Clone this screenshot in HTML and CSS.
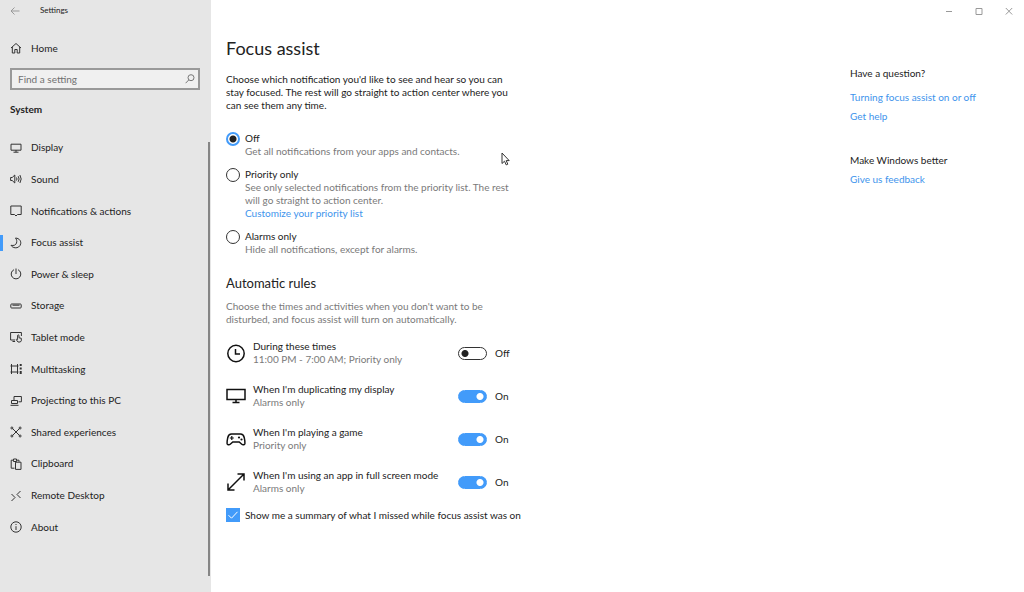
FILE: index.html
```html
<!DOCTYPE html>
<html lang="en">
<head>
    <meta charset="UTF-8">
    <meta name="viewport" content="width=device-width, initial-scale=1.0">
    <title>Settings</title>
    <link rel="stylesheet" href="styles.css">
</head>
<body>
    <div class="sidebar">
        <header class="titlebar">
            <button class="back" aria-label="Back">
                <svg width="10" height="10" viewBox="0 0 10 10"><path d="M9.5 5H1M4.5 1.5L1 5l3.5 3.5"/></svg>
            </button>
            <span>Settings</span>
        </header>

        <a class="nav-link home" href="#">
            <svg class="icon" viewBox="0 0 12 12"><path d="M1 6l5-4.5L11 6M2.3 5v6h2.5V7.5h2.4V11h2.5V5"/></svg>
            Home
        </a>

        <form class="search">
            <input type="text" placeholder="Find a setting" aria-label="Find a setting">
            <svg width="10" height="10" viewBox="0 0 10 10"><circle cx="6" cy="3.7" r="3"/><path d="M3.8 5.9L.6 9.2"/></svg>
        </form>

        <h2 class="section-name">System</h2>

        <div class="nav-area">
            <nav class="nav-list">
                <a class="nav-link" href="#">
                    <svg class="icon" viewBox="0 0 12 12"><path d="M1 2.2h10v6H1zM3.5 10.2h5M6 8.2v2"/></svg>
                    Display
                </a>
                <a class="nav-link" href="#">
                    <svg class="icon" viewBox="0 0 12 12"><path d="M.6 4.5h1.6L4.8 2v8L2.2 7.5H.6zM6.5 4.5q1 1.500 0 3M8.2 3.2q1.800 2.800 0 5.600M9.900 2q2.600 4 0 8"/></svg>
                    Sound
                </a>
                <a class="nav-link" href="#">
                    <svg class="icon" viewBox="0 0 12 12"><path d="M.8 1h10.400v8.500H7.500L6 11 4.500 9.500H.8z"/></svg>
                    Notifications &amp; actions
                </a>
                <a class="nav-link active" href="#">
                    <svg class="icon" viewBox="0 0 12 12"><path d="M5.500 1c4 .3 5.700 3.200 5.200 5.800-.5 2.700-3 4.300-5.500 4C3.300 10.600 1.800 9.700 1 8.300c2.800.6 4.800-.2 5.500-2.300.6-1.800.2-3.600-1-5z"/></svg>
                    Focus assist
                </a>
                <a class="nav-link" href="#">
                    <svg class="icon" viewBox="0 0 12 12"><path d="M6 .5V6M4 1.700a4.800 4.800 0 1 0 4 0"/></svg>
                    Power &amp; sleep
                </a>
                <a class="nav-link" href="#">
                    <svg class="icon" viewBox="0 0 12 12"><rect x=".8" y="4" width="10.400" height="4" rx=".8"/><path d="M2.500 5.200h7"/></svg>
                    Storage
                </a>
                <a class="nav-link" href="#">
                    <svg class="icon" viewBox="0 0 12 12"><path d="M5 9H.6V1.500h10.800V5M2.500 10.500h2.600M7.600 8.500V4.300q.8-.8 1.400 0v2.500l2.300.5v2.500L10.300 11H8L6.200 8.600q.5-.8 1.400-.1"/></svg>
                    Tablet mode
                </a>
                <a class="nav-link" href="#">
                    <svg class="icon" viewBox="0 0 12 12"><path d="M1.500 3v6M7.500 3v6M.5 3h8M.5 9h8M1.500 1v2M7.500 1v2M1.500 9v2M7.500 9v2"/><path class="bold" d="M10.700 1v2M10.700 4.500v2M10.700 8v3"/></svg>
                    Multitasking
                </a>
                <a class="nav-link" href="#">
                    <svg class="icon" viewBox="0 0 12 12"><path d="M4 5.500v-4h7.400v5.300H8.500M1.500 5.500h6v3h-6zM.5 10.300h8"/></svg>
                    Projecting to this PC
                </a>
                <a class="nav-link" href="#">
                    <svg class="icon" viewBox="0 0 12 12"><path d="M2.500 2.500L9.500 9.500M9.500 2.500L2.500 9.500"/><circle cx="1.900" cy="2" r="1"/><circle cx="10.100" cy="2" r="1"/><circle cx="1.900" cy="10" r="1"/><circle cx="10.100" cy="10" r="1"/></svg>
                    Shared experiences
                </a>
                <a class="nav-link" href="#">
                    <svg class="icon" viewBox="0 0 12 12"><path d="M4.500 10.200H1.200v-8H3.500V1h3v1.200H9v1.500M3.500 2.200v1.300h3V2.200M5.500 4.200H11v7.200H5.500z"/></svg>
                    Clipboard
                </a>
                <a class="nav-link" href="#">
                    <svg class="icon" viewBox="0 0 12 12"><path d="M1.500 4L5 7.500 1.500 11M10.500 1L7 4.500 10.500 8"/></svg>
                    Remote Desktop
                </a>
                <a class="nav-link" href="#">
                    <svg class="icon" viewBox="0 0 12 12"><circle cx="6" cy="6" r="5.200"/><path d="M6 5.200V9M6 3v1"/></svg>
                    About
                </a>
            </nav>
            <div class="scrollbar"></div>
        </div>
    </div>

    <main class="main">
        <div class="window-controls">
            <button aria-label="Minimize"><svg width="8" height="8" viewBox="0 0 8 8"><path d="M1 4.500h6"/></svg></button>
            <button aria-label="Maximize"><svg width="8" height="8" viewBox="0 0 8 8"><path d="M1 1.500h6v6H1z"/></svg></button>
            <button aria-label="Close"><svg width="8" height="8" viewBox="0 0 8 8"><path d="M.8 1l6.400 6.500M7.200 1L.8 7.500"/></svg></button>
        </div>

        <div class="content">
            <div class="page">
                <h1>Focus assist</h1>
                <p class="intro">Choose which notification you'd like to see and hear so you can stay focused. The rest will go straight to action center where you can see them any time.</p>

                <div class="options">
                    <div class="option">
                        <input type="radio" name="mode" id="mode-off" checked>
                        <div>
                            <label for="mode-off">Off</label>
                            <p class="muted">Get all notifications from your apps and contacts.</p>
                        </div>
                    </div>
                    <div class="option">
                        <input type="radio" name="mode" id="mode-priority">
                        <div>
                            <label for="mode-priority">Priority only</label>
                            <p class="muted">See only selected notifications from the priority list. The rest will go straight to action center.</p>
                            <a href="#">Customize your priority list</a>
                        </div>
                    </div>
                    <div class="option">
                        <input type="radio" name="mode" id="mode-alarms">
                        <div>
                            <label for="mode-alarms">Alarms only</label>
                            <p class="muted">Hide all notifications, except for alarms.</p>
                        </div>
                    </div>
                </div>

                <h2>Automatic rules</h2>
                <p class="muted rules-intro">Choose the times and activities when you don't want to be disturbed, and focus assist will turn on automatically.</p>

                <div class="rules">
                    <div class="rule">
                        <svg class="rule-icon" viewBox="0 0 20 20"><circle cx="10" cy="10.500" r="8.200"/><path d="M9.500 6v5H14"/></svg>
                        <div class="rule-text">
                            <label for="rule-times">During these times</label>
                            <p class="muted">11:00 PM - 7:00 AM; Priority only</p>
                        </div>
                        <input class="toggle" type="checkbox" role="switch" id="rule-times">
                        <span class="state">Off</span>
                    </div>
                    <div class="rule">
                        <svg class="rule-icon" viewBox="0 0 20 20"><path d="M1 3.500h18v10H1zM10 13.500v3M6.500 16.500h7"/></svg>
                        <div class="rule-text">
                            <label for="rule-display">When I'm duplicating my display</label>
                            <p class="muted">Alarms only</p>
                        </div>
                        <input class="toggle" type="checkbox" role="switch" id="rule-display" checked>
                        <span class="state">On</span>
                    </div>
                    <div class="rule">
                        <svg class="rule-icon" viewBox="0 0 20 20"><path d="M5.500 5h9c2.500 0 3.200 1.300 3.700 3.500.5 2.300 1 4.400.7 6-.3 1.400-2 1.800-3.100.8L13.200 13H6.800l-2.600 2.300c-1.100 1-2.800.6-3.100-.8-.3-1.600.2-3.700.7-6C2.300 6.300 3 5 5.500 5z"/><path class="thin" d="M5.800 7v4M3.800 9h4"/><g class="dots"><circle cx="13" cy="8.500" r="1.100"/><circle cx="15.500" cy="10.500" r="1.100"/></g></svg>
                        <div class="rule-text">
                            <label for="rule-game">When I'm playing a game</label>
                            <p class="muted">Priority only</p>
                        </div>
                        <input class="toggle" type="checkbox" role="switch" id="rule-game" checked>
                        <span class="state">On</span>
                    </div>
                    <div class="rule">
                        <svg class="rule-icon" viewBox="0 0 20 20"><path d="M2 18L18 2M11.500 2H18v6.500M2 11.500V18h6.500"/></svg>
                        <div class="rule-text">
                            <label for="rule-full">When I'm using an app in full screen mode</label>
                            <p class="muted">Alarms only</p>
                        </div>
                        <input class="toggle" type="checkbox" role="switch" id="rule-full" checked>
                        <span class="state">On</span>
                    </div>
                </div>

                <div class="summary">
                    <span class="checkbox">
                        <input type="checkbox" id="summary" checked>
                        <svg viewBox="0 0 14 14"><path d="M2.500 7.200l3 3 6-6.400"/></svg>
                    </span>
                    <label for="summary">Show me a summary of what I missed while focus assist was on</label>
                </div>
            </div>

            <aside class="help">
                <h3>Have a question?</h3>
                <ul class="links">
                    <li><a href="#">Turning focus assist on or off</a></li>
                    <li><a href="#">Get help</a></li>
                </ul>
                <h3>Make Windows better</h3>
                <a href="#">Give us feedback</a>
            </aside>
        </div>
    </main>

    <svg class="cursor" viewBox="0 0 9 14"><path d="M1 1v10.500l2.500-2.300 1.700 3.700 1.600-.7-1.600-3.600h3z"/></svg>
</body>
</html>
```
FILE: styles.css
```css
* {
    box-sizing: border-box;
}

body {
    margin: 0;
    display: flex;
    min-height: 100vh;
    font: 10px/13px Lato, "Open Sans", sans-serif;
    color: #222;
    background: #fff;
}

h1, h2, h3, p, ul {
    margin: 0;
    padding: 0;
    font-weight: normal;
}

ul { list-style: none; }

a {
    color: #3e94ec;
    text-decoration: none;
}

button {
    padding: 0;
    border: none;
    background: none;
}

input {
    margin: 0;
    font: inherit;
}

svg {
    display: block;
    flex: none;
    fill: none;
    stroke: #333;
}

label { display: block; }

.muted { color: #7a7a7a; }

/* Sidebar */
.sidebar {
    width: 211px;
    flex: none;
    display: flex;
    flex-direction: column;
    background: #e6e6e6;
}

.titlebar {
    display: flex;
    align-items: center;
    gap: 20px;
    height: 21px;
    padding-left: 10px;
    font-size: 8px;
}

.back svg { stroke: #999; }

.nav-link {
    display: flex;
    align-items: center;
    gap: 9px;
    padding-left: 10px;
    color: #222;
}

.icon {
    width: 12px;
    height: 12px;
}

.bold { stroke-width: 2; }

.home {
    height: 32px;
    margin-top: 11px;
}

.search {
    position: relative;
    margin: 4px 11px 0 10px;
}

.search input {
    display: block;
    width: 100%;
    height: 22px;
    padding: 0 24px 0 6px;
    border: 2px solid #999;
    background: #f0f0f0;
}

.search input::placeholder { color: #707070; }

.search svg {
    position: absolute;
    right: 5px;
    top: 6px;
    stroke: #777;
}

.section-name {
    margin: 13px 0 0 10px;
    font-size: 10px;
    font-weight: bold;
}

.nav-area {
    flex: 1;
    display: flex;
    margin-top: 16px;
}

.nav-list {
    flex: 1;
    display: grid;
    grid-auto-rows: 1fr;
    padding-bottom: 49px;
}

.active {
    background: linear-gradient(#429bfa, #429bfa) left center / 3px 16px no-repeat;
}

.scrollbar {
    width: 2px;
    margin: 10px 1px 16px 0;
    background: #858585;
}

/* Main area */
.main {
    flex: 1;
}

.window-controls {
    display: flex;
    justify-content: flex-end;
    height: 21px;
}

.window-controls button {
    width: 30px;
    display: flex;
    align-items: center;
    justify-content: center;
}

.window-controls svg { stroke: #999; }

.content {
    display: flex;
    justify-content: space-between;
    padding: 15px 0 24px 15px;
}

.page { width: 300px; }

h1 {
    font-size: 18px;
    line-height: 24px;
}

.intro {
    width: 288px;
    margin-top: 13px;
}

.options {
    display: grid;
    gap: 10px;
    margin-top: 20px;
}

.option {
    display: flex;
    gap: 5px;
}

.option > div { width: 268px; }

.option input {
    appearance: none;
    flex: none;
    width: 14px;
    height: 14px;
    border: 1px solid #333;
    border-radius: 50%;
}

.option input:checked {
    border: 2px solid #429bfa;
    background: radial-gradient(circle, #222 3px, transparent 4px);
}

.page h2 {
    margin-top: 18px;
    font-size: 13px;
    line-height: 18px;
}

.rules-intro {
    width: 270px;
    margin-top: 8px;
}

.rules {
    display: grid;
    gap: 17px;
    margin-top: 14px;
}

.rule {
    display: flex;
    align-items: center;
}

.rule-icon {
    width: 20px;
    height: 20px;
    margin-right: 7px;
    stroke: #111;
    stroke-width: 1.5;
}

.thin { stroke-width: 1.2; }

.dots {
    fill: #111;
    stroke: none;
}

.rule-text { width: 205px; }

.toggle {
    appearance: none;
    width: 29px;
    height: 13px;
    border: 1px solid #333;
    border-radius: 7px;
    background: radial-gradient(circle at 6px 50%, #222 3px, transparent 4px);
}

.toggle:checked {
    border-color: #429bfa;
    background: radial-gradient(circle at 21px 50%, #fff 3px, #429bfa 4px);
}

.state { margin-left: 8px; }

.summary {
    display: flex;
    align-items: center;
    gap: 5px;
    margin-top: 13px;
    white-space: nowrap;
}

.checkbox {
    position: relative;
    width: 14px;
    height: 14px;
}

.checkbox input {
    appearance: none;
    display: block;
    width: 14px;
    height: 14px;
    background: #429bfa;
}

.checkbox svg {
    position: absolute;
    inset: 0;
    stroke: #fff;
    pointer-events: none;
}

/* Help column */
.help {
    width: 174px;
    padding-top: 31px;
}

.links {
    display: grid;
    gap: 6px;
    margin: 11px 0 31px;
}

.help h3 {
    font-size: 10px;
    margin-bottom: 6px;
}

/* Mouse pointer */
.cursor {
    position: absolute;
    left: 501px;
    top: 152px;
    width: 9px;
    height: 14px;
    fill: #fff;
}
```
